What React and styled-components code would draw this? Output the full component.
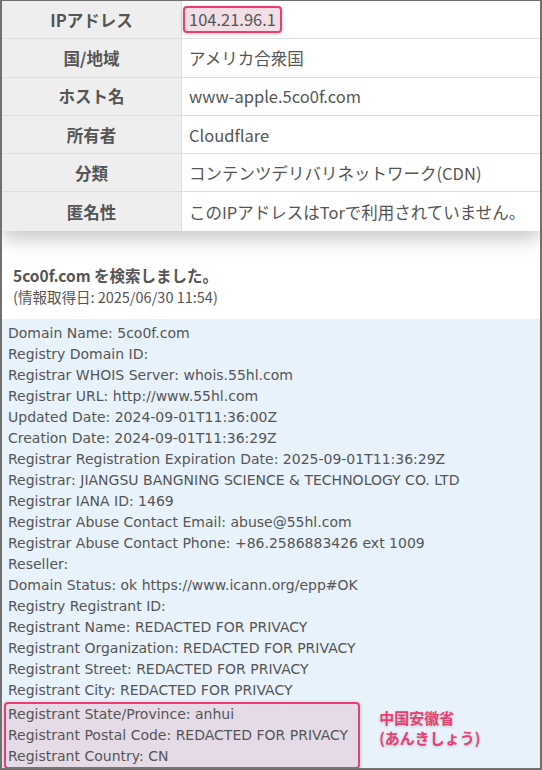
import React from "react"
import styled, { createGlobalStyle } from "styled-components"

const GlobalStyle = createGlobalStyle`
  html, body {
    margin: 0;
    padding: 0;
    background: #ffffff;
  }
`

const rows = [
  { label: "IPアドレス", value: "104.21.96.1", mark: true },
  { label: "国/地域", value: "アメリカ合衆国" },
  { label: "ホスト名", value: "www-apple.5co0f.com" },
  { label: "所有者", value: "Cloudflare" },
  { label: "分類", value: "コンテンツデリバリネットワーク(CDN)" },
  { label: "匿名性", value: "このIPアドレスはTorで利用されていません。" },
]

const whois = [
  "Domain Name: 5co0f.com",
  "Registry Domain ID:",
  "Registrar WHOIS Server: whois.55hl.com",
  "Registrar URL: http://www.55hl.com",
  "Updated Date: 2024-09-01T11:36:00Z",
  "Creation Date: 2024-09-01T11:36:29Z",
  "Registrar Registration Expiration Date: 2025-09-01T11:36:29Z",
  "Registrar: JIANGSU BANGNING SCIENCE & TECHNOLOGY CO. LTD",
  "Registrar IANA ID: 1469",
  "Registrar Abuse Contact Email: abuse@55hl.com",
  "Registrar Abuse Contact Phone: +86.2586883426 ext 1009",
  "Reseller:",
  "Domain Status: ok https://www.icann.org/epp#OK",
  "Registry Registrant ID:",
  "Registrant Name: REDACTED FOR PRIVACY",
  "Registrant Organization: REDACTED FOR PRIVACY",
  "Registrant Street: REDACTED FOR PRIVACY",
  "Registrant City: REDACTED FOR PRIVACY",
]

const marked = [
  "Registrant State/Province: anhui",
  "Registrant Postal Code: REDACTED FOR PRIVACY",
  "Registrant Country: CN",
]

const App = () => {
  return (
    <>
      <GlobalStyle />
      <Frame>
        <InfoTable>
          {rows.map((r) => (
            <Row key={r.label}>
              <Label>{r.label}</Label>
              <Value>{r.mark ? <IpMark>{r.value}</IpMark> : r.value}</Value>
            </Row>
          ))}
        </InfoTable>

        <SearchHead>
          <SearchTitle>5co0f.com を検索しました。</SearchTitle>
          <SearchDate>(情報取得日: 2025/06/30 11:54)</SearchDate>
        </SearchHead>

        <WhoisBox>
          {whois.map((line) => (
            <Line key={line}>{line}</Line>
          ))}
          <MarkedArea>
            <MarkBox>
              {marked.map((line) => (
                <Line key={line}>{line}</Line>
              ))}
            </MarkBox>
            <Note>
              中国安徽省
              <br />
              (あんきしょう)
            </Note>
          </MarkedArea>
        </WhoisBox>
      </Frame>
    </>
  )
}

export default App

const Frame = styled.div`
  width: 542px;
  height: 770px;
  box-sizing: border-box;
  border-style: solid;
  border-color: #707070;
  border-width: 1px 2px 2px 2px;
  overflow: hidden;
  display: flex;
  flex-direction: column;
  background: #ffffff;
  font-family: "Noto Sans CJK JP", "Noto Sans", sans-serif;
`

const InfoTable = styled.div`
  display: flex;
  flex-direction: column;
  box-shadow: 0 8px 18px rgba(0, 0, 0, 0.22);
  position: relative;
  z-index: 1;
`

const Row = styled.div`
  display: grid;
  grid-template-columns: 180px 1fr;
  height: 38.3px;
  box-sizing: border-box;
  border-bottom: 1px solid #dedede;

  &:last-child {
    border-bottom: none;
  }
`

const Label = styled.div`
  display: flex;
  align-items: center;
  justify-content: center;
  background: #eeeeee;
  border-right: 1px solid #dedede;
  color: #555555;
  font-size: 16.5px;
  font-weight: 700;
`

const Value = styled.div`
  display: flex;
  align-items: center;
  padding-left: 7px;
  background: #ffffff;
  color: #555555;
  font-size: 16.5px;
`

const IpMark = styled.span`
  margin-left: -6px;
  padding: 1px 4px;
  border: 2px solid #ec3d72;
  border-radius: 4px;
  background: #f2dfe5;
  box-shadow: 0 1px 4px rgba(0, 0, 0, 0.2);
  line-height: 21px;
`

const SearchHead = styled.div`
  padding: 34px 11px 13px;
  display: flex;
  flex-direction: column;
  gap: 3px;
  color: #555555;
`

const SearchTitle = styled.div`
  font-size: 15.5px;
  font-weight: 700;
  line-height: 20px;
`

const SearchDate = styled.div`
  font-size: 14.5px;
  line-height: 18px;
`

const WhoisBox = styled.div`
  flex: 1;
  background: #e8f2fb;
  padding: 4px 0 0 6px;
  font-family: "DejaVu Sans", Verdana, sans-serif;
  font-size: 14px;
  color: #555555;
`

const Line = styled.div`
  line-height: 21px;
  white-space: nowrap;
`

const MarkedArea = styled.div`
  display: flex;
  align-items: flex-start;
  gap: 19px;
`

const MarkBox = styled.div`
  margin-left: -4px;
  margin-top: 1px;
  padding: 0 10px 0 2px;
  border: 2px solid #ec3d72;
  border-radius: 4px;
  background: #e4dbe7;
  box-shadow: 0 1px 4px rgba(0, 0, 0, 0.2);
`

const Note = styled.div`
  margin-top: 7px;
  font-family: "Noto Sans CJK JP", sans-serif;
  font-size: 15px;
  font-weight: 700;
  line-height: 20px;
  color: #ec3d72;
  text-shadow: 0 1px 3px rgba(0, 0, 0, 0.2);
`
